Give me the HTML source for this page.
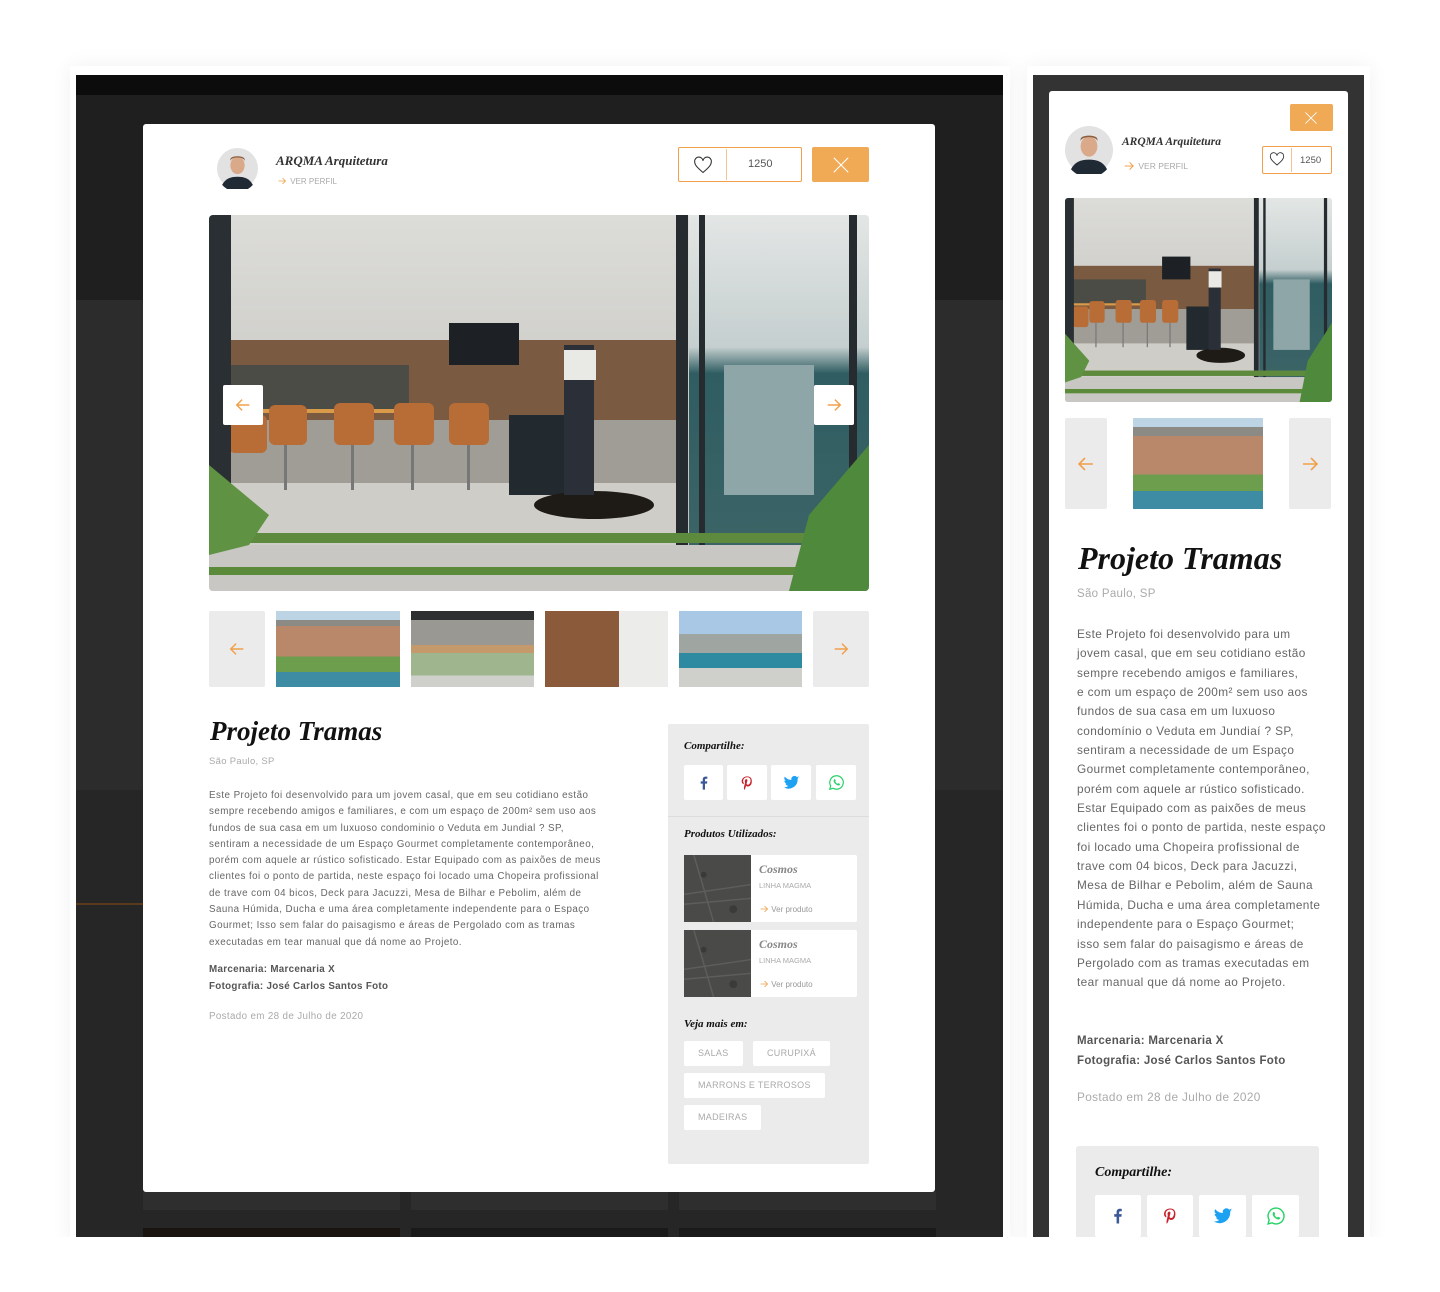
<!DOCTYPE html>
<html><head><meta charset="utf-8">
<style>
*{margin:0;padding:0;box-sizing:border-box}
body{width:1440px;height:1292px;background:#fff;position:relative;overflow:hidden;font-family:"Liberation Sans",sans-serif}
.a{position:absolute}
.ser{font-family:"Liberation Serif",serif;font-style:italic;font-weight:bold;color:#111}
.btn{background:#ebebeb;border-radius:2px}
.wb{background:#fff;border-radius:2px;display:flex;align-items:center;justify-content:center}
.tag{position:absolute;background:#fff;color:#aaa;font-size:9px;letter-spacing:.3px;height:25px;line-height:25px;padding:0 14px;border-radius:2px}
.nw{white-space:nowrap}
</style></head><body>
<svg width="0" height="0" style="position:absolute">
<defs>
<symbol id="photo" viewBox="0 0 660 376" preserveAspectRatio="none">
<defs><linearGradient id="ce" x1="0" y1="0" x2="0" y2="1"><stop offset="0" stop-color="#dcdcd8"/><stop offset="1" stop-color="#bdbbb6"/></linearGradient>
<linearGradient id="gl" x1="0" y1="0" x2="0" y2="1"><stop offset="0" stop-color="#e3e6e5"/><stop offset=".4" stop-color="#c5cfcf"/><stop offset=".48" stop-color="#2f5d62"/><stop offset="1" stop-color="#3b6467"/></linearGradient></defs>
<rect width="660" height="376" fill="url(#ce)"/>
<rect x="0" y="125" width="470" height="80" fill="#7a5a40"/>
<rect x="20" y="150" width="180" height="45" fill="#4a4c45"/>
<rect x="20" y="194" width="180" height="4" fill="#d99a4a"/>
<rect x="240" y="108" width="70" height="42" fill="#1d2126"/>
<rect x="0" y="205" width="470" height="65" fill="#a09d96"/>
<rect x="0" y="268" width="470" height="108" fill="#cfcdc7"/>
<rect x="0" y="330" width="660" height="46" fill="#c8c7c3"/>
<g fill="#b86c36"><rect x="60" y="190" width="38" height="40" rx="6"/><rect x="125" y="188" width="40" height="42" rx="6"/><rect x="185" y="188" width="40" height="42" rx="6"/><rect x="240" y="188" width="40" height="42" rx="6"/><rect x="20" y="200" width="38" height="38" rx="6"/></g>
<g fill="#777"><rect x="75" y="230" width="3" height="45"/><rect x="142" y="230" width="3" height="45"/><rect x="202" y="230" width="3" height="45"/><rect x="258" y="230" width="3" height="45"/></g>
<rect x="300" y="200" width="70" height="80" fill="#222a30"/>
<ellipse cx="385" cy="290" rx="60" ry="14" fill="#1e1a16"/>
<rect x="355" y="130" width="30" height="150" fill="#2b2f38"/>
<rect x="355" y="135" width="32" height="30" fill="#e9e9e6"/>
<rect x="480" y="0" width="180" height="330" fill="url(#gl)"/>
<rect x="515" y="150" width="90" height="130" fill="#8fa6a8"/>
<rect x="0" y="0" width="22" height="330" fill="#2a2f33"/>
<rect x="467" y="0" width="12" height="330" fill="#262b2f"/>
<rect x="490" y="0" width="6" height="330" fill="#262b2f"/>
<rect x="640" y="0" width="8" height="330" fill="#262b2f"/>
<rect x="0" y="318" width="660" height="10" fill="#5e8a3e"/>
<rect x="0" y="352" width="660" height="8" fill="#5b8a3a"/>
<path d="M0 250 L60 300 L40 330 L0 340Z" fill="#5f9243"/>
<path d="M660 230 L600 300 L580 376 L660 376Z" fill="#4f8a3c"/>
</symbol>
<symbol id="arrL" viewBox="0 0 20 20"><path d="M17 10H3M9 4L3 10L9 16" fill="none" stroke="#f0a04b" stroke-width="1.6"/></symbol>
<symbol id="arrR" viewBox="0 0 20 20"><path d="M3 10H17M11 4L17 10L11 16" fill="none" stroke="#f0a04b" stroke-width="1.6"/></symbol>
<symbol id="heart" viewBox="0 0 24 24"><path d="M12 21C5 15 2 12 2 8a5 5 0 0 1 10-1 5 5 0 0 1 10 1c0 4-3 7-10 13z" fill="none" stroke="#333" stroke-width="1.3"/></symbol>
<symbol id="x" viewBox="0 0 20 20"><path d="M2 2L18 18M18 2L2 18" stroke="#fff" stroke-width="1.2"/></symbol>
<symbol id="fb" viewBox="0 0 24 24"><path d="M13.5 22v-9h3l.5-3.5h-3.5V7.3c0-1 .3-1.7 1.7-1.7H17V2.5c-.3 0-1.4-.1-2.6-.1-2.6 0-4.3 1.6-4.3 4.4v2.7H7V13h3.1v9z" fill="#3b5998"/></symbol>
<symbol id="pin" viewBox="0 0 24 24"><path d="M12.3 2C6.8 2 4 5.9 4 9.2c0 2 .8 3.7 2.4 4.4.3.1.5 0 .6-.3l.2-1c.1-.3 0-.4-.2-.7-.5-.6-.8-1.3-.8-2.4 0-3 2.3-5.8 6-5.8 3.3 0 5.1 2 5.1 4.7 0 3.5-1.6 6.5-3.9 6.5-1.3 0-2.2-1-1.9-2.3.4-1.5 1.1-3.2 1.1-4.3 0-1-.5-1.8-1.6-1.8-1.3 0-2.3 1.3-2.3 3.1 0 1.1.4 1.9.4 1.9l-1.5 6.5c-.4 1.9-.1 4.3 0 4.5 0 .1.2.2.3.1.1-.1 1.4-1.8 1.9-3.4l.8-3c.4.7 1.5 1.4 2.7 1.4 3.5 0 5.9-3.2 5.9-7.5C19.7 5.1 16.9 2 12.3 2z" fill="#c8232c"/></symbol>
<symbol id="tw" viewBox="0 0 24 24"><path d="M23 5c-.8.4-1.7.6-2.6.7.9-.6 1.6-1.4 2-2.5-.9.5-1.9.9-2.9 1.1a4.5 4.5 0 0 0-7.7 4.1C8 8.2 4.7 6.4 2.5 3.7a4.5 4.5 0 0 0 1.4 6c-.7 0-1.4-.2-2-.6 0 2.2 1.6 4 3.6 4.4-.7.2-1.4.2-2 .1.6 1.8 2.2 3.1 4.2 3.1A9 9 0 0 1 1 18.6 12.8 12.8 0 0 0 20.7 7.2V6.6c.9-.6 1.7-1.4 2.3-2.3z" fill="#1da1f2"/></symbol>
<symbol id="wa" viewBox="0 0 24 24"><path d="M12 2.5a9.5 9.5 0 0 0-8.2 14.3L2.5 21.5l4.8-1.3A9.5 9.5 0 1 0 12 2.5z" fill="none" stroke="#25d366" stroke-width="1.7"/><path d="M8.6 7.5c.3-.3.6-.3.8-.3h.5l1 2.3c.1.2 0 .4-.1.6l-.6.7c.7 1.3 1.8 2.4 3.2 3.1l.7-.8c.2-.2.4-.2.6-.1l2.2 1c.1.6-.1 1.4-.7 1.8-.7.5-1.7.6-3.5-.2-2.3-1-4-3.2-4.5-4.6-.4-1.3-.1-2.8.4-3.5z" fill="#25d366"/></symbol>
<symbol id="stone" viewBox="0 0 68 68" preserveAspectRatio="none"><rect width="68" height="68" fill="#4a4b49"/><path d="M0 40 L68 30 M0 50 L68 44 M10 0 L30 68" stroke="#5d5e5b" stroke-width="1.5"/><circle cx="20" cy="20" r="3" fill="#3a3b39"/><circle cx="50" cy="55" r="4" fill="#3b3c3a"/></symbol>
<symbol id="av" viewBox="0 0 40 40"><circle cx="20" cy="20" r="20" fill="#e2e2e2"/><ellipse cx="20" cy="17" rx="7" ry="8.5" fill="#d9a98a"/><path d="M13 13c0-5 14-5 14 0v-2c0-4-14-4-14 0z" fill="#8a6040"/><path d="M5 36c3-6 8-8 15-8s12 2 15 8a20 20 0 0 1-30 0z" fill="#1f2a35"/></symbol>
</defs></svg>

<!-- LEFT FRAME -->
<div class="a" style="left:70px;top:66px;width:940px;height:1180px;box-shadow:0 0 20px rgba(0,0,0,.06)"></div>
<div class="a" style="left:76px;top:75px;width:927px;height:1162px;background:#262626;overflow:hidden">
 <div class="a" style="left:0;top:0;width:927px;height:20px;background:#0c0c0c"></div>
 <div class="a" style="left:0;top:20px;width:927px;height:205px;background:#1f1f1f"></div>
 <div class="a" style="left:0;top:225px;width:927px;height:490px;background:#2c2c2c"></div>
 <div class="a" style="left:0;top:828px;width:70px;height:2px;background:#5a3a1a"></div>
 <div class="a" style="left:67px;top:1117px;width:257px;height:18px;background:#2e2e2e"></div>
 <div class="a" style="left:335px;top:1117px;width:257px;height:18px;background:#2e2e2e"></div>
 <div class="a" style="left:603px;top:1117px;width:257px;height:18px;background:#2e2e2e"></div>
 <div class="a" style="left:67px;top:1153px;width:257px;height:9px;background:#1a1410"></div>
 <div class="a" style="left:335px;top:1153px;width:257px;height:9px;background:#1a1a1a"></div>
 <div class="a" style="left:603px;top:1153px;width:257px;height:9px;background:#1a1a1a"></div>
</div>

<!-- MODAL -->
<div class="a" style="left:143px;top:124px;width:792px;height:1068px;background:#fff;border-radius:3px"></div>
<svg class="a" style="left:217px;top:148px" width="41" height="41"><use href="#av"/></svg>
<div class="a ser" style="left:276px;top:153px;font-size:13px;color:#333">ARQMA Arquitetura</div>
<div class="a" style="left:276px;top:176px;font-size:8px;color:#aaa;display:flex;align-items:center"><svg width="12" height="10" viewBox="0 0 20 20"><use href="#arrR"/></svg>&nbsp;VER PERFIL</div>
<div class="a" style="left:678px;top:147px;width:124px;height:35px;border:1.5px solid #f0a04b;border-radius:2px"></div>
<div class="a" style="left:726px;top:149px;width:1px;height:31px;background:#f3c48e"></div>
<svg class="a" style="left:693px;top:155px" width="20" height="20"><use href="#heart"/></svg>
<div class="a" style="left:748px;top:158px;font-size:11px;color:#555">1250</div>
<div class="a" style="left:812px;top:147px;width:57px;height:35px;background:#f0a955;border-radius:2px"></div>
<svg class="a" style="left:832px;top:156px" width="18" height="18"><use href="#x"/></svg>

<svg class="a" style="left:209px;top:215px;border-radius:4px" width="660" height="376"><use href="#photo" width="660" height="376"/></svg>
<div class="a wb" style="left:223px;top:385px;width:40px;height:40px"><svg width="18" height="18"><use href="#arrL"/></svg></div>
<div class="a wb" style="left:814px;top:385px;width:40px;height:40px"><svg width="18" height="18"><use href="#arrR"/></svg></div>

<div class="a btn" style="left:209px;top:611px;width:56px;height:76px;display:flex;align-items:center;justify-content:center"><svg width="18" height="18"><use href="#arrL"/></svg></div>
<div class="a btn" style="left:813px;top:611px;width:56px;height:76px;display:flex;align-items:center;justify-content:center"><svg width="18" height="18"><use href="#arrR"/></svg></div>
<div class="a" style="left:276px;top:611px;width:124px;height:76px;background:linear-gradient(180deg,#bcd4e4 0 12%,#8c8a85 12% 20%,#b9876a 20% 60%,#6d9e4e 60% 80%,#3e8ca3 80%)"></div>
<div class="a" style="left:411px;top:611px;width:123px;height:76px;background:linear-gradient(180deg,#2e2f30 0 12%,#9a9893 12% 45%,#c49a6c 45% 55%,#9fb58e 55% 85%,#cfcfcc 85%)"></div>
<div class="a" style="left:545px;top:611px;width:123px;height:76px;background:linear-gradient(90deg,#8a5a3a 0 60%,#ececea 60%)"></div>
<div class="a" style="left:679px;top:611px;width:123px;height:76px;background:linear-gradient(180deg,#a8c8e6 0 30%,#9fa5a0 30% 55%,#2e8aa0 55% 75%,#cfcfcc 75%)"></div>

<div class="a ser" style="left:210px;top:716px;font-size:27px">Projeto Tramas</div>
<div class="a" style="left:209px;top:756px;font-size:9.5px;color:#aaa;letter-spacing:.3px">São Paulo, SP</div>
<div class="a nw" style="left:209px;top:788px;font-size:9.8px;line-height:16.3px;color:#666;letter-spacing:.45px">Este Projeto foi desenvolvido para um jovem casal, que em seu cotidiano estão<br>sempre recebendo amigos e familiares, e com um espaço de 200m² sem uso aos<br>fundos de sua casa em um luxuoso condominio o Veduta em Jundial ? SP,<br>sentiram a necessidade de um Espaço Gourmet completamente contemporâneo,<br>porém com aquele ar rústico sofisticado. Estar Equipado com as paixões de meus<br>clientes foi o ponto de partida, neste espaço foi locado uma Chopeira profissional<br>de trave com 04 bicos, Deck para Jacuzzi, Mesa de Bilhar e Pebolim, além de<br>Sauna Húmida, Ducha e uma área completamente independente para o Espaço<br>Gourmet; Isso sem falar do paisagismo e áreas de Pergolado com as tramas<br>executadas em tear manual que dá nome ao Projeto.</div>
<div class="a" style="left:209px;top:961px;font-size:9.8px;line-height:17px;color:#555;font-weight:bold;letter-spacing:.3px">Marcenaria: Marcenaria X<br>Fotografia: José Carlos Santos Foto</div>
<div class="a" style="left:209px;top:1011px;font-size:9.8px;color:#aaa;letter-spacing:.35px">Postado em 28 de Julho de 2020</div>

<!-- sidebar -->
<div class="a" style="left:668px;top:724px;width:201px;height:440px;background:#ebebeb;border-radius:2px"></div>
<div class="a ser" style="left:684px;top:740px;font-size:11px">Compartilhe:</div>
<div class="a wb" style="left:684px;top:765px;width:39px;height:35px"><svg width="16" height="16"><use href="#fb"/></svg></div>
<div class="a wb" style="left:727px;top:765px;width:40px;height:35px"><svg width="16" height="16"><use href="#pin"/></svg></div>
<div class="a wb" style="left:771px;top:765px;width:40px;height:35px"><svg width="17" height="17"><use href="#tw"/></svg></div>
<div class="a wb" style="left:816px;top:765px;width:40px;height:35px"><svg width="17" height="17"><use href="#wa"/></svg></div>
<div class="a" style="left:668px;top:816px;width:201px;height:1px;background:#dcdcdc"></div>
<div class="a ser" style="left:684px;top:828px;font-size:11px">Produtos Utilizados:</div>
<div class="a" style="left:684px;top:855px;width:173px;height:67px;background:#fff;border-radius:2px"></div>
<svg class="a" style="left:684px;top:855px" width="67" height="67"><use href="#stone" width="67" height="67"/></svg>
<div class="a ser" style="left:759px;top:862px;font-size:12px;color:#888">Cosmos</div>
<div class="a" style="left:759px;top:881px;font-size:7.5px;color:#aaa">LINHA MAGMA</div>
<div class="a" style="left:759px;top:904px;font-size:8px;color:#999;display:flex;align-items:center"><svg width="10" height="10" viewBox="0 0 20 20"><use href="#arrR"/></svg>&nbsp;Ver produto</div>
<div class="a" style="left:684px;top:930px;width:173px;height:67px;background:#fff;border-radius:2px"></div>
<svg class="a" style="left:684px;top:930px" width="67" height="67"><use href="#stone" width="67" height="67"/></svg>
<div class="a ser" style="left:759px;top:937px;font-size:12px;color:#888">Cosmos</div>
<div class="a" style="left:759px;top:956px;font-size:7.5px;color:#aaa">LINHA MAGMA</div>
<div class="a" style="left:759px;top:979px;font-size:8px;color:#999;display:flex;align-items:center"><svg width="10" height="10" viewBox="0 0 20 20"><use href="#arrR"/></svg>&nbsp;Ver produto</div>
<div class="a ser" style="left:684px;top:1018px;font-size:11px">Veja mais em:</div>
<div class="tag" style="left:684px;top:1041px">SALAS</div>
<div class="tag" style="left:753px;top:1041px">CURUPIXÁ</div>
<div class="tag" style="left:684px;top:1073px">MARRONS E TERROSOS</div>
<div class="tag" style="left:684px;top:1105px">MADEIRAS</div>

<!-- RIGHT MOBILE FRAME -->
<div class="a" style="left:1027px;top:66px;width:343px;height:1180px;box-shadow:0 0 20px rgba(0,0,0,.06)"></div>
<div class="a" style="left:1033px;top:75px;width:331px;height:1162px;background:#333;overflow:hidden">
 <div class="a" style="left:16px;top:16px;width:299px;height:1200px;background:#fff;border-radius:3px"></div>
</div>
<div class="a" style="left:1290px;top:104px;width:43px;height:27px;background:#f0a955;border-radius:2px"></div>
<svg class="a" style="left:1304px;top:111px" width="14" height="14"><use href="#x"/></svg>
<svg class="a" style="left:1065px;top:126px" width="48" height="48"><use href="#av"/></svg>
<div class="a ser" style="left:1122px;top:136px;font-size:11.5px;color:#333">ARQMA Arquitetura</div>
<div class="a" style="left:1122px;top:160px;font-size:8.5px;color:#aaa;display:flex;align-items:center"><svg width="14" height="12" viewBox="0 0 20 20"><use href="#arrR"/></svg>&nbsp;VER PERFIL</div>
<div class="a" style="left:1262px;top:146px;width:70px;height:28px;border:1.5px solid #f0a04b;border-radius:2px"></div>
<div class="a" style="left:1291px;top:148px;width:1px;height:24px;background:#f3c48e"></div>
<svg class="a" style="left:1269px;top:151px" width="16" height="16"><use href="#heart"/></svg>
<div class="a" style="left:1300px;top:155px;font-size:9.5px;color:#555">1250</div>
<svg class="a" style="left:1065px;top:198px;border-radius:3px" width="267" height="204"><use href="#photo" width="267" height="204"/></svg>
<div class="a btn" style="left:1065px;top:418px;width:42px;height:91px;display:flex;align-items:center;justify-content:center"><svg width="20" height="20"><use href="#arrL"/></svg></div>
<div class="a btn" style="left:1289px;top:418px;width:42px;height:91px;display:flex;align-items:center;justify-content:center"><svg width="20" height="20"><use href="#arrR"/></svg></div>
<div class="a" style="left:1133px;top:418px;width:130px;height:91px;background:linear-gradient(180deg,#bcd4e4 0 10%,#8c8a85 10% 20%,#b9876a 20% 62%,#6d9e4e 62% 80%,#3e8ca3 80%)"></div>
<div class="a ser" style="left:1078px;top:540px;font-size:32px">Projeto Tramas</div>
<div class="a" style="left:1077px;top:588px;font-size:11.5px;color:#aaa;letter-spacing:.3px">São Paulo, SP</div>
<div class="a nw" style="left:1077px;top:625px;font-size:11.8px;line-height:19.35px;color:#666;letter-spacing:.4px">Este Projeto foi desenvolvido para um<br>jovem casal, que em seu cotidiano estão<br>sempre recebendo amigos e familiares,<br>e com um espaço de 200m² sem uso aos<br>fundos de sua casa em um luxuoso<br>condomínio o Veduta em Jundiaí ? SP,<br>sentiram a necessidade de um Espaço<br>Gourmet completamente contemporâneo,<br>porém com aquele ar rústico sofisticado.<br>Estar Equipado com as paixões de meus<br>clientes foi o ponto de partida, neste espaço<br>foi locado uma Chopeira profissional de<br>trave com 04 bicos, Deck para Jacuzzi,<br>Mesa de Bilhar e Pebolim, além de Sauna<br>Húmida, Ducha e uma área completamente<br>independente para o Espaço Gourmet;<br>isso sem falar do paisagismo e áreas de<br>Pergolado com as tramas executadas em<br>tear manual que dá nome ao Projeto.</div>
<div class="a" style="left:1077px;top:1031px;font-size:11.5px;line-height:20px;color:#555;font-weight:bold;letter-spacing:.3px">Marcenaria: Marcenaria X<br>Fotografia: José Carlos Santos Foto</div>
<div class="a" style="left:1077px;top:1090px;font-size:11.8px;color:#aaa;letter-spacing:.35px">Postado em 28 de Julho de 2020</div>
<div class="a" style="left:1076px;top:1146px;width:243px;height:100px;background:#ebebeb;border-radius:3px"></div>
<div class="a ser" style="left:1095px;top:1165px;font-size:14px">Compartilhe:</div>
<div class="a wb" style="left:1095px;top:1195px;width:46px;height:42px"><svg width="18" height="18"><use href="#fb"/></svg></div>
<div class="a wb" style="left:1147px;top:1195px;width:46px;height:42px"><svg width="18" height="18"><use href="#pin"/></svg></div>
<div class="a wb" style="left:1199px;top:1195px;width:47px;height:42px"><svg width="20" height="20"><use href="#tw"/></svg></div>
<div class="a wb" style="left:1252px;top:1195px;width:47px;height:42px"><svg width="20" height="20"><use href="#wa"/></svg></div>
<div class="a" style="left:0;top:1237px;width:1440px;height:55px;background:#fff"></div>
</body></html>
